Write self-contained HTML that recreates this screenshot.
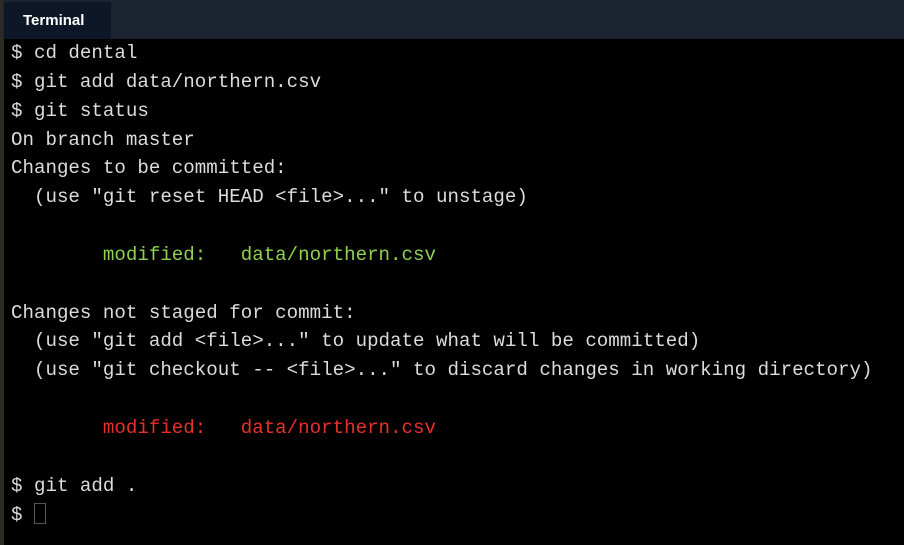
<!DOCTYPE html>
<html><head><style>
html,body{margin:0;padding:0;width:904px;height:545px;overflow:hidden;background:#2e2a22;}
.hdr{position:absolute;left:3px;top:0;width:901px;height:39px;background:#1c2331;}
.tab{position:absolute;left:4px;top:2px;width:107px;height:37px;background:#0e1727;color:#fff;font:bold 15px "Liberation Sans",sans-serif;line-height:37px;text-indent:19px;}
.term{position:absolute;left:4px;top:39px;width:900px;height:506px;background:#000;}
pre{margin:0;position:absolute;left:7px;top:0px;font-family:"Liberation Mono",monospace;font-size:19.15px;line-height:28.85px;color:#dcdcdc;}
.g{color:#8fd14f}.r{color:#e8302c}
.cur{display:inline-block;width:10px;height:19px;border:1px solid #555;vertical-align:-4px;}
</style></head><body>
<div class="hdr"></div><div class="tab">Terminal</div>
<div class="term"><pre>$ cd dental
$ git add data/northern.csv
$ git status
On branch master
Changes to be committed:
  (use "git reset HEAD &lt;file&gt;..." to unstage)

        <span class="g">modified:   data/northern.csv</span>

Changes not staged for commit:
  (use "git add &lt;file&gt;..." to update what will be committed)
  (use "git checkout -- &lt;file&gt;..." to discard changes in working directory)

        <span class="r">modified:   data/northern.csv</span>

$ git add .
$ <span class="cur"></span></pre></div>
</body></html>
